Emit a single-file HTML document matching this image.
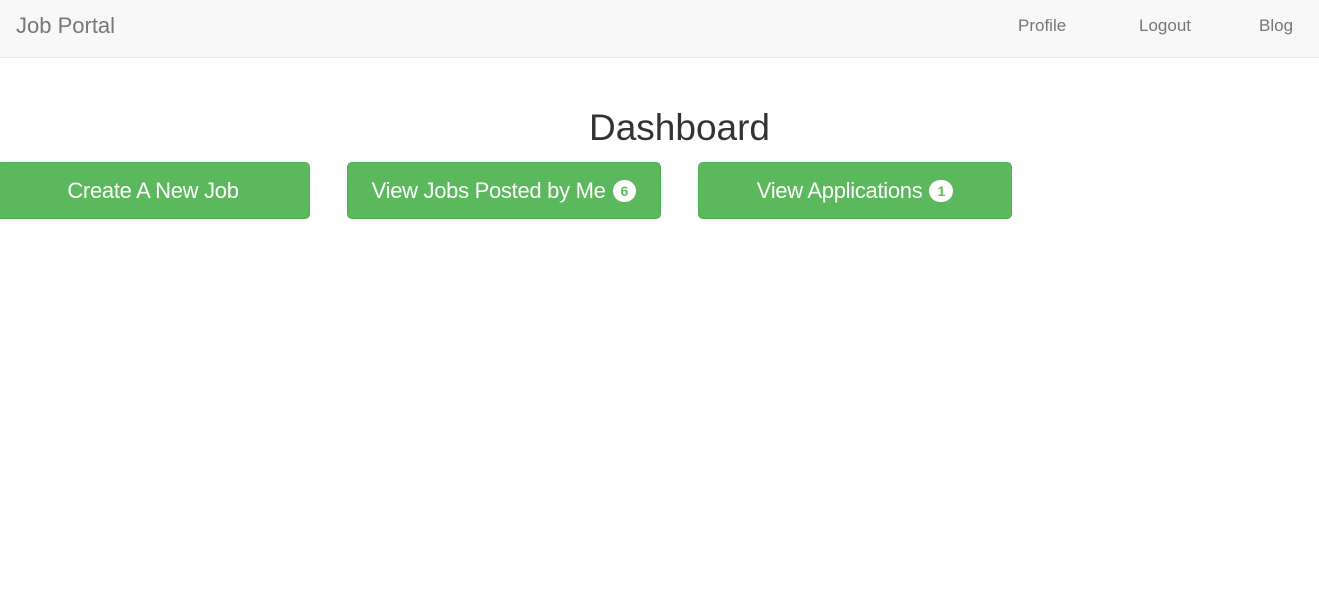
<!DOCTYPE html><html><head><style>
body{margin:0;font-family:"Liberation Sans",sans-serif;background:#fff;width:1319px;height:602px;overflow:hidden;position:relative}
.nav{position:absolute;left:0;top:0;width:1319px;height:57px;background:#f8f8f8;border-bottom:1px solid #e7e7e7}
.brand{position:absolute;left:16px;top:13px;font-size:22px;color:#777}
.nl{position:absolute;top:16px;font-size:17px;color:#777}
h1{position:absolute;margin:0;left:0;width:1359px;text-align:center;top:107px;font-size:37px;font-weight:400;color:#333}
.b{position:absolute;top:162px;height:55px;width:312px;background:#5cb85c;border:1px solid #4cae4c;border-radius:5px;color:#fff;font-size:22px;letter-spacing:-0.3px;display:flex;align-items:center;justify-content:center;box-sizing:content-box}
.bd{display:inline-block;background:#fff;color:#5cb85c;font-size:14px;font-weight:bold;border-radius:11px;padding:3px 8px;margin-left:7px;line-height:16px;letter-spacing:0}
</style></head><body>
<div class="nav"><div class="brand">Job Portal</div>
<div class="nl" style="left:1018px">Profile</div><div class="nl" style="left:1139px">Logout</div><div class="nl" style="left:1259px">Blog</div></div>
<h1>Dashboard</h1>
<div class="b" style="left:-4px">Create A New Job</div>
<div class="b" style="left:347px;width:312px">View Jobs Posted by Me<span class="bd">6</span></div>
<div class="b" style="left:698px;width:312px">View Applications<span class="bd">1</span></div>
</body></html>
